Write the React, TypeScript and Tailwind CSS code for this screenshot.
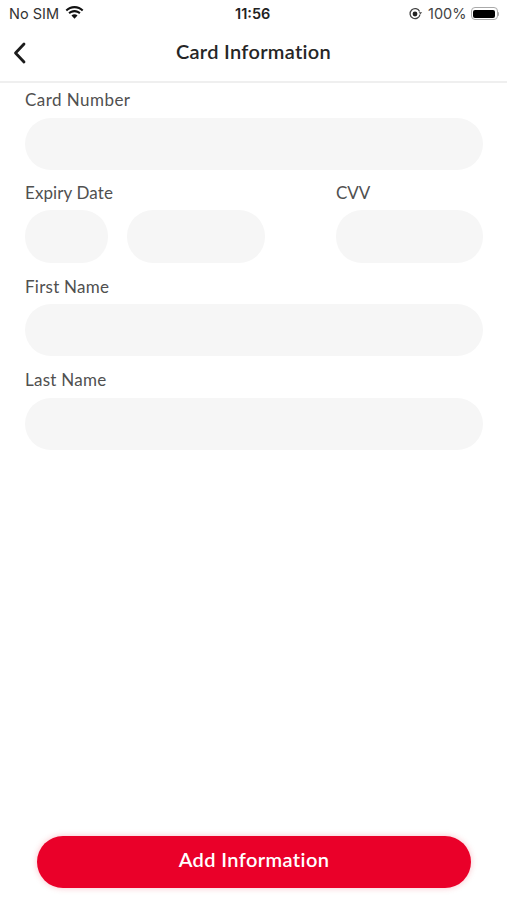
const font = "[font-family:Lato,'Noto_Sans',sans-serif]";

function Field({ label, labelClass = "" }: { label: string; labelClass?: string }) {
  return (
    <div className="flex flex-col">
      <label className={`h-[24px] text-[17px] leading-[24px] text-[#505050] ${labelClass}`}>{label}</label>
      <div className="mt-[6px] h-[52px] rounded-[26px] bg-[#f6f6f6]" />
    </div>
  );
}

export default function App() {
  return (
    <div className={`flex h-[900px] w-[507px] flex-col overflow-hidden bg-white ${font}`}>
      {/* status bar */}
      <div className="flex h-[27px] items-center justify-between pl-[9px] pr-[8px] font-['Inter',sans-serif] text-[14.5px] text-[#333]">
        <div className="flex items-center gap-[6px]">
          <span>No SIM</span>
          <svg width="19" height="14" viewBox="0 0 19 14" fill="#111" className="-mt-[2px]">
            <path d="M9.5 2.2c2.9 0 5.5 1.1 7.5 3l1.4-1.5C16.100 1.400 13 0 9.500 0S2.900 1.400.600 3.700L2 5.200c2-1.900 4.600-3 7.500-3z" />
            <path d="M9.500 6.200c1.800 0 3.400.7 4.700 1.800l1.400-1.500C14 5 11.900 4.100 9.500 4.100S5 5 3.400 6.500l1.400 1.500c1.300-1.100 2.900-1.800 4.700-1.800z" />
            <path d="M9.500 8.300c-1.200 0-2.200.4-3 1.200l3 3.300 3-3.300c-.8-.8-1.800-1.200-3-1.200z" />
          </svg>
        </div>
        <span className="absolute left-[235px] font-semibold text-[#222]">11:56</span>
        <div className="flex items-center gap-[4px]">
          <svg width="15" height="14" viewBox="0 0 15 14" fill="none" className="mr-[1px]">
            <path d="M11.600 4.500A5 5 0 1 0 12 7.500" stroke="#444" strokeWidth="1.300" />
            <path d="M10.600 5.200h3.600l-1.800 2z" fill="#444" />
            <circle cx="7" cy="7" r="2.400" fill="#222" />
          </svg>
          <span className="text-[#444]">100%</span>
          <div className="flex items-center">
            <div className="flex h-[13px] w-[27px] items-center rounded-[4px] border border-[#aaa] p-[1.500px]">
              <div className="h-full w-full rounded-[2px] bg-black" />
            </div>
            <div className="h-[4px] w-[1.500px] rounded-r-sm bg-[#aaa]" />
          </div>
        </div>
      </div>

      {/* header */}
      <div className="relative flex h-[56px] items-center justify-center border-b-2 border-[#efefef] pb-[6px]">
        <button className="absolute left-[13px] top-[15px]">
          <svg width="13" height="22" viewBox="0 0 13 22" fill="none" stroke="#1c1c1c" strokeWidth="2.800" strokeLinecap="round" strokeLinejoin="round">
            <path d="M11 2 2.500 11 11 20" />
          </svg>
        </button>
        <h1 className="text-[20px] font-semibold tracking-[0.3px] text-[#262626]">Card Information</h1>
      </div>

      {/* form */}
      <form className="flex flex-col gap-[11px] pl-[25px] pr-[24px] pt-[5px]">
        <Field label="Card Number" labelClass="tracking-[0.45px]" />
        <div className="flex">
          <div className="flex flex-col">
            <label className="h-[24px] text-[17px] leading-[24px] tracking-[0.1px] text-[#505050]">Expiry Date</label>
            <div className="mt-[5px] flex gap-[19px]">
              <div className="h-[53px] w-[83px] rounded-[26px] bg-[#f6f6f6]" />
              <div className="h-[53px] w-[138px] rounded-[26px] bg-[#f6f6f6]" />
            </div>
          </div>
          <div className="ml-[71px] flex flex-1 flex-col">
            <label className="h-[24px] text-[17px] leading-[24px] text-[#505050]">CVV</label>
            <div className="mt-[5px] h-[53px] rounded-[26px] bg-[#f6f6f6]" />
          </div>
        </div>
        <Field label="First Name" labelClass="pt-[1px] tracking-[0.25px]" />
        <div className="mt-[1px]">
          <Field label="Last Name" labelClass="tracking-[0.25px]" />
        </div>
      </form>

      {/* add button */}
      <div className="mt-auto pb-[12px] pl-[37px] pr-[36px]">
        <button className="h-[52px] w-full rounded-[26px] bg-[#ea0029] pb-[6px] text-[20px] font-semibold tracking-[0.4px] text-white shadow-[0_0_6px_rgba(236,0,41,0.25)]">
          Add Information
        </button>
      </div>
    </div>
  );
}
